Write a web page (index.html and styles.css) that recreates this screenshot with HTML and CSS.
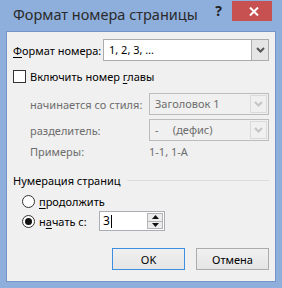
FILE: index.html
```html
<!DOCTYPE html>
<html lang="ru">
<head>
    <meta charset="UTF-8">
    <title>Формат номера страницы</title>
    <link rel="stylesheet" href="styles.css">
</head>
<body>
    <div class="window">
        <!-- заголовок окна -->
        <div class="titlebar">
            <span class="title">Формат номера страницы</span>
            <span class="help">?</span>
            <span class="close">
                <svg width="10" height="9" viewBox="0 0 10 9">
                    <path d="M1 0.5 L9 8.5 M9 0.5 L1 8.5" stroke="#fff" stroke-width="2" fill="none"/>
                </svg>
            </span>
        </div>

        <div class="client">
            <div class="row row-format">
                <span class="label-main"><u>Ф</u>ормат номера:</span>
                <div class="combo combo-main">
                    <span class="combo-text">1, 2, 3, …</span>
                    <span class="combo-btn">
                        <svg width="9" height="6" viewBox="0 0 9 6"><path d="M1 1 L4.5 4.5 L8 1" stroke="#555" stroke-width="2" fill="none"/></svg>
                    </span>
                </div>
            </div>

            <div class="row row-check">
                <span class="checkbox"></span>
                <span>Включить номер <u>г</u>лавы</span>
            </div>

            <div class="row row-sub row-style">
                <span class="sub-label">начинается со стиля:</span>
                <div class="combo combo-disabled">
                    <span class="combo-text">Заголовок 1</span>
                    <span class="combo-btn">
                        <svg width="9" height="6" viewBox="0 0 9 6"><path d="M1 1 L4.5 4.5 L8 1" stroke="#c4c4c4" stroke-width="2" fill="none"/></svg>
                    </span>
                </div>
            </div>

            <div class="row row-sub row-sep">
                <span class="sub-label">разделитель:</span>
                <div class="combo combo-disabled">
                    <span class="combo-text">-&nbsp;&nbsp;&nbsp;&nbsp;&nbsp;(дефис)</span>
                    <span class="combo-btn">
                        <svg width="9" height="6" viewBox="0 0 9 6"><path d="M1 1 L4.5 4.5 L8 1" stroke="#c4c4c4" stroke-width="2" fill="none"/></svg>
                    </span>
                </div>
            </div>

            <div class="row row-sub row-examples">
                <span class="sub-label">Примеры:</span>
                <span class="examples">1-1, 1-A</span>
            </div>

            <!-- группа нумерации -->
            <div class="group-head">
                <span>Нумерация страниц</span>
                <span class="group-line"></span>
            </div>

            <div class="row row-radio">
                <span class="radio"></span>
                <span><u>п</u>родолжить</span>
            </div>

            <div class="row row-radio row-start">
                <span class="radio checked"></span>
                <span class="start-label">н<u>а</u>чать с:</span>
                <div class="spin">
                    <span class="spin-text">3<span class="caret"></span></span>
                    <span class="spin-btns">
                        <span class="spin-up">
                            <svg width="7" height="5" viewBox="0 0 7 5"><path d="M3.5 0 L7 4 L0 4 Z" fill="#111"/></svg>
                        </span>
                        <span class="spin-down">
                            <svg width="7" height="5" viewBox="0 0 7 5"><path d="M0 1 L7 1 L3.5 5 Z" fill="#111"/></svg>
                        </span>
                    </span>
                </div>
            </div>

            <div class="buttons">
                <button class="btn btn-default">OK</button>
                <button class="btn">Отмена</button>
            </div>
        </div>
    </div>
</body>
</html>
```

FILE: styles.css
```css
* {
    margin: 0;
    padding: 0;
    box-sizing: border-box;
}

body {
    font-family: 'Noto Sans', 'Open Sans', sans-serif;
    font-size: 11px;
    color: #000;
    width: 282px;
    height: 288px;
    overflow: hidden;
    white-space: nowrap;
}

u {
    text-decoration: underline;
    text-underline-offset: 2px;
}

.window {
    width: 282px;
    height: 288px;
    background: #8eaedc;
    padding: 0 6px 6px 6px;
}

.titlebar {
    height: 31px;
    display: flex;
    align-items: flex-start;
}

.title {
    font-size: 14.5px;
    color: #2a2a2a;
    padding-left: 7px;
    padding-top: 4px;
    line-height: 20px;
    flex: 1;
}

.help {
    font-weight: bold;
    font-size: 14px;
    color: #222;
    margin-top: 2px;
    margin-right: 10px;
    line-height: 18px;
}

.close {
    width: 40px;
    height: 20px;
    margin-top: 1px;
    margin-right: 4px;
    background: #c75050;
    display: flex;
    align-items: center;
    justify-content: center;
    padding-left: 4px;
}

.close svg {
    display: block;
}

.client {
    height: 251px;
    background: #f0f0f0;
    border: 1px solid #7595c8;
    padding: 7px 6px 0 6px;
}

.row {
    display: flex;
    align-items: center;
}

.row > * {
    flex-shrink: 0;
}

.row-format {
    height: 22px;
}

.label-main {
    width: 90px;
}

.combo {
    display: flex;
    height: 22px;
    border: 1px solid #acacac;
    background: #fff;
}

.combo-main {
    width: 166px;
}

.combo-text {
    flex: 1;
    padding-left: 5px;
    line-height: 20px;
}

.combo-btn {
    width: 17px;
    display: flex;
    align-items: center;
    justify-content: center;
    background: #e5e5e5;
    border: 1px solid #acacac;
    border-width: 0 0 0 1px;
}

.combo-btn svg {
    display: block;
}

.combo-disabled {
    width: 120px;
    background: #f0f0f0;
    border-color: #bcbcbc;
    color: #6d6d6d;
}

.combo-disabled .combo-btn {
    margin: 1px;
    background: #f0f0f0;
    border: 1px solid #dadada;
}

.row-check {
    margin-top: 9px;
    height: 13px;
    gap: 4px;
}

.checkbox {
    width: 13px;
    height: 13px;
    border: 1px solid #333;
    background: #fff;
}

.row-sub {
    padding-left: 17px;
    color: #6d6d6d;
}

.sub-label {
    width: 119px;
}

.row-style {
    margin-top: 10px;
}

.row-sep {
    margin-top: 4px;
}

.row-examples {
    margin-top: 2px;
    height: 16px;
}

.group-head {
    display: flex;
    align-items: center;
    margin-top: 13px;
    height: 16px;
    gap: 6px;
}

.group-line {
    flex: 1;
    height: 1px;
    background: #dcdcdc;
}

.row-radio {
    padding-left: 9px;
    gap: 4px;
    height: 14px;
    margin-top: 6px;
}

.radio {
    width: 13px;
    height: 13px;
    border: 1px solid #333;
    border-radius: 50%;
    background: #fff;
    display: flex;
    align-items: center;
    justify-content: center;
}

.radio.checked::after {
    content: "";
    width: 7px;
    height: 7px;
    border-radius: 50%;
    background: #111;
}

.row-start {
    height: 20px;
    margin-top: 3px;
}

.start-label {
    width: 56px;
}

.spin {
    width: 66px;
    height: 20px;
    border: 1px solid #abadb3;
    background: #fff;
    display: flex;
}

.spin-text {
    flex: 1;
    padding-left: 3px;
    line-height: 18px;
    display: flex;
    align-items: center;
    font-size: 12px;
}

.caret {
    width: 1px;
    height: 13px;
    background: #000;
    margin-left: 1px;
}

.spin-btns {
    width: 16px;
    margin: 0 1px 0 0;
    padding: 1px 0;
    display: flex;
    flex-direction: column;
}

.spin-up,
.spin-down {
    flex: 1;
    display: flex;
    align-items: center;
    justify-content: center;
    background: #ececec;
    border: 1px solid #b4b4b4;
}

.spin-down {
    border-top: none;
}

.spin svg {
    display: block;
}

.buttons {
    display: flex;
    justify-content: flex-end;
    gap: 11px;
    margin-top: 17px;
}

.btn {
    width: 73px;
    height: 22px;
    font-family: inherit;
    font-size: 11px;
    color: #000;
    background: linear-gradient(#f0f0f0, #e5e5e5);
    border: 1px solid #acacac;
}

.btn-default {
    border-color: #3c8fe0;
}
```
